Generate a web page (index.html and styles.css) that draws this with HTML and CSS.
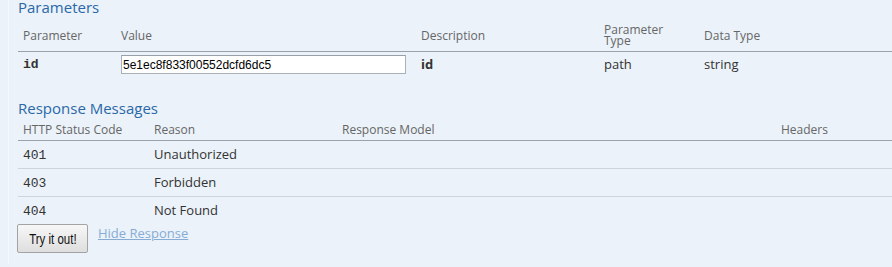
FILE: index.html
```html
<!DOCTYPE html>
<html>
<head>
<meta charset="utf-8">
<link rel="stylesheet" href="styles.css">
</head>
<body>
<div class="op">
  <h4 class="sec-title first">Parameters</h4>
  <table class="tbl">
    <colgroup><col class="p1"><col class="p2"><col class="p3"><col class="p4"><col></colgroup>
    <thead>
      <tr><th>Parameter</th><th>Value</th><th>Description</th><th>Parameter<br>Type</th><th>Data Type</th></tr>
    </thead>
    <tbody>
      <tr class="param-row">
        <td class="code strong">id</td>
        <td><input class="val" type="text" value="5e1ec8f833f00552dcfd6dc5"></td>
        <td class="strong-sans">id</td>
        <td>path</td>
        <td>string</td>
      </tr>
    </tbody>
  </table>

  <h4 class="sec-title second">Response Messages</h4>
  <table class="tbl resp">
    <colgroup><col class="r1"><col class="r2"><col class="r3"><col></colgroup>
    <thead>
      <tr><th>HTTP Status Code</th><th>Reason</th><th>Response Model</th><th>Headers</th></tr>
    </thead>
    <tbody>
      <tr><td class="code">401</td><td>Unauthorized</td><td></td><td></td></tr>
      <tr><td class="code">403</td><td>Forbidden</td><td></td><td></td></tr>
      <tr><td class="code">404</td><td>Not Found</td><td></td><td></td></tr>
    </tbody>
  </table>

  <div class="actions">
    <button class="try" type="button"><span class="try-label">Try it out!</span></button>
    <a class="hide" href="#">Hide Response</a>
  </div>
</div>
</body>
</html>
```

FILE: styles.css
```css
html, body {
  margin: 0;
  padding: 0;
  background: #ebf2f9;
  overflow: hidden;
}
body {
  width: 892px;
  height: 267px;
  font-family: "Open Sans", "Noto Sans", sans-serif;
  color: #333;
}
.op {
  margin-left: 8px;
  border-left: 1px solid #f6f9fc;
  padding-left: 9px;
  height: 267px;
  box-sizing: border-box;
}
.sec-title {
  margin: 0;
  font-size: 15px;
  font-weight: normal;
  line-height: 20px;
  color: #2a68a8;
}
.sec-title.first {
  margin-top: -3px;
  margin-bottom: 2px;
}
.sec-title.second {
  margin-top: 21px;
  margin-bottom: 1px;
}
.tbl {
  width: 100%;
  table-layout: fixed;
  border-collapse: separate;
  border-spacing: 0;
}
.p1 { width: 98px; }
.p2 { width: 300px; }
.p3 { width: 183px; }
.p4 { width: 100px; }
.r1 { width: 131px; }
.r2 { width: 188px; }
.r3 { width: 439px; }
.tbl th {
  text-align: left;
  font-weight: normal;
  font-size: 12px;
  line-height: 11px;
  color: #666;
  padding: 5px 5px;
  vertical-align: middle;
  border-bottom: 1px solid #9ba1a8;
}
.tbl td {
  font-size: 13px;
  line-height: 17px;
  padding: 5px 5px;
  vertical-align: top;
  color: #333;
}
.resp td.code {
  padding-top: 6px;
  padding-bottom: 4px;
}
.resp tbody tr td {
  border-bottom: 1px solid #cdd4db;
}
.resp tbody tr:last-child td {
  border-bottom: none;
}
.param-row td {
  padding: 3px 5px;
  line-height: 19px;
  vertical-align: middle;
}
.code {
  font-family: "Liberation Mono", "DejaVu Sans Mono", monospace;
  font-size: 11px;
  color: #222;
}
.strong {
  font-weight: bold;
}
.strong-sans {
  font-weight: bold;
  color: #222;
}
.val {
  display: block;
  box-sizing: border-box;
  width: 285px;
  height: 19px;
  margin: 0;
  padding: 1px 1px;
  font-family: "Liberation Sans", Arial, sans-serif;
  font-size: 12px;
  color: #000;
  background: #fff;
  border: 1px solid #a9b0b7;
  border-top-color: #9aa0a6;
}
.actions {
  display: flex;
  align-items: flex-start;
}
.try {
  margin: 0 0 0 -1px;
  width: 71px;
  height: 29px;
  box-sizing: border-box;
  padding: 0;
  font-family: "Liberation Sans", Arial, sans-serif;
  font-size: 14px;
  color: #111;
  background: linear-gradient(#f7f7f7, #dedede);
  border: 1px solid #a3a3a3;
  border-radius: 2px;
}
.try-label {
  display: inline-block;
  transform: scaleX(0.82);
}
.hide {
  margin-left: 10px;
  font-size: 13px;
  line-height: 18px;
  color: #86acd6;
  text-decoration: underline;
}
```
